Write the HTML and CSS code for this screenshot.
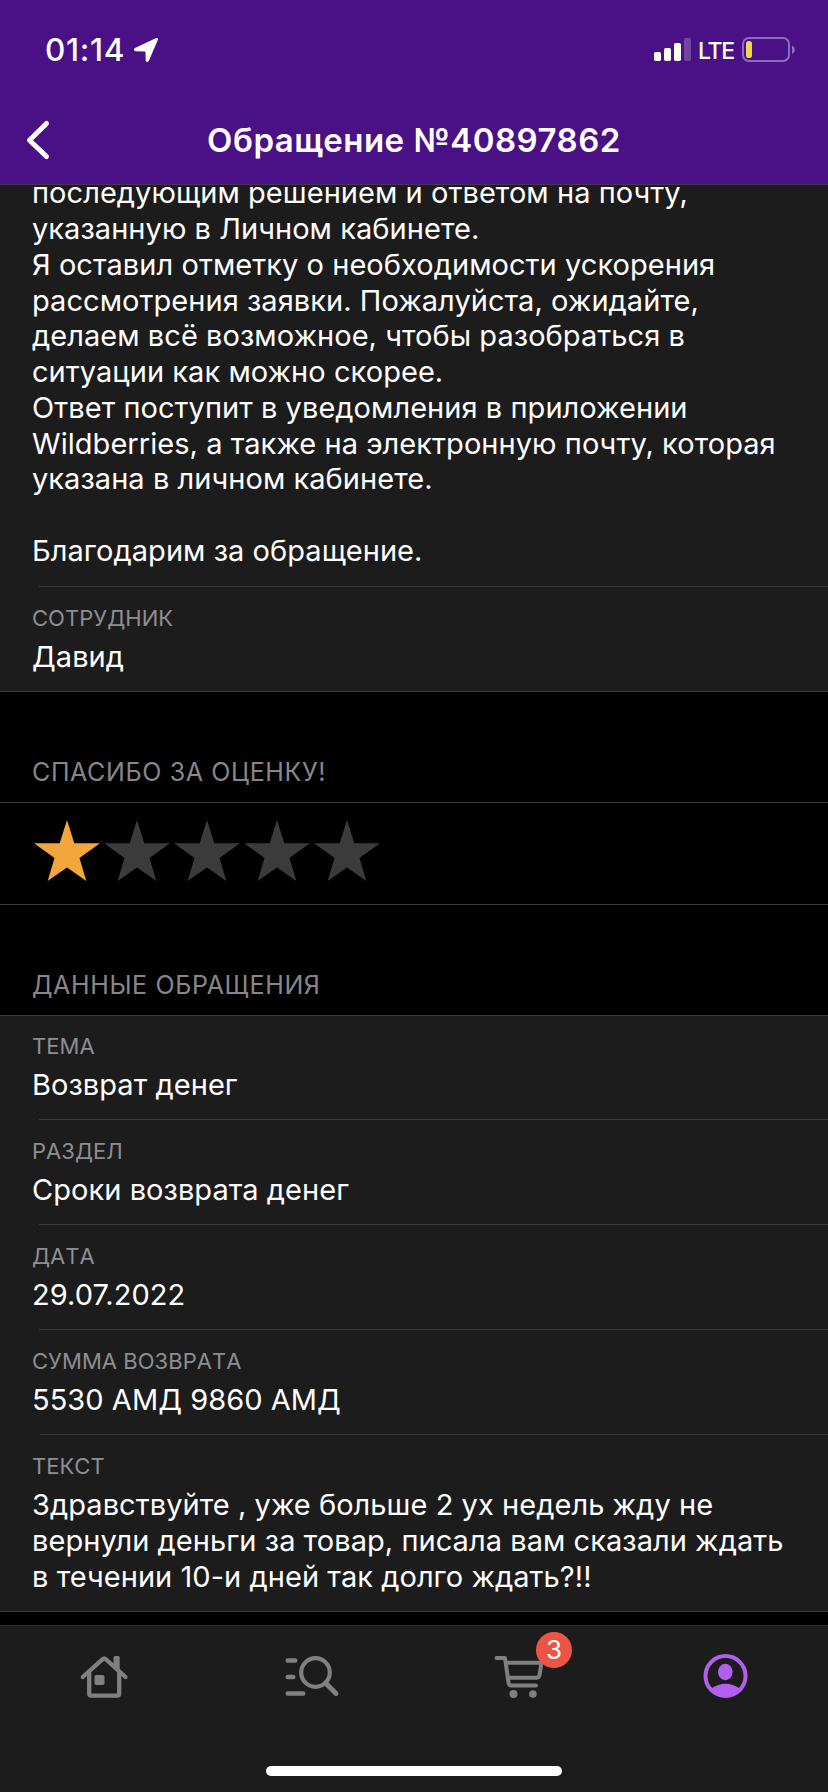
FILE: index.html
```
<!DOCTYPE html>
<html lang="ru">
<head>
<meta charset="utf-8">
<title>Обращение №40897862</title>
<link rel="stylesheet" href="styles.css">
</head>
<body>
<div class="screen">
  <header class="header">
    <div class="status">
      <div class="status-left">
        <span class="time">01:14</span>
        <svg class="location" width="26" height="26" viewBox="133 37 26 26"><path d="M156.200 38.100c1.200-.5 2.200.5 1.700 1.700L148.900 60.800c-.7 1.700-3.100 1.400-3.200-.5l-.2-8c0-.6-.3-.9-.9-.9l-9-.2c-1.900-.1-2.200-2.400-.6-3.200z" fill="#fff"/></svg>
      </div>
      <div class="status-right">
        <svg class="signal" width="38" height="24" viewBox="0 0 38 24"><g fill="#fff"><rect x="0" y="14" width="7" height="9" rx="1.700"/><rect x="10" y="10" width="7" height="13" rx="1.700"/><rect x="20" y="5" width="7" height="18" rx="1.700"/><rect x="30" y="0" width="7" height="23" rx="1.700" opacity=".22"/></g></svg>
        <span class="lte">LTE</span>
        <svg class="battery" width="54" height="26" viewBox="0 0 54 26"><rect x="1" y="1" width="46" height="23" rx="6" fill="none" stroke="#8f6bbd" stroke-width="2"/><path d="M50 8.500c3.700 1.200 3.700 7.300 0 8.500z" fill="#8f6bbd"/><rect x="4" y="4" width="6" height="17" rx="2.800" fill="#f2d64b"/></svg>
      </div>
    </div>
    <div class="nav">
      <svg class="back" width="26" height="42" viewBox="25 119 26 42"><path d="M46.500 123.500 29.500 140.200 46.500 156.500" fill="none" stroke="#fff" stroke-width="5" stroke-linecap="round" stroke-linejoin="round"/></svg>
      <h1 class="title">Обращение №40897862</h1>
    </div>
  </header>

  <main class="content">
    <section class="answer">
      <p class="body-text">последующим решением и ответом на почту,<br>указанную в Личном кабинете.<br>Я оставил отметку о необходимости ускорения<br>рассмотрения заявки. Пожалуйста, ожидайте,<br>делаем всё возможное, чтобы разобраться в<br>ситуации как можно скорее.<br>Ответ поступит в уведомления в приложении<br>Wildberries, а также на электронную почту, которая<br>указана в личном кабинете.<br><br>Благодарим за обращение.</p>
    </section>
    <div class="row"><div class="label">СОТРУДНИК</div><div class="body-text">Давид</div></div>

    <h2 class="heading">СПАСИБО ЗА ОЦЕНКУ!</h2>
    <div class="stars">
      <svg class="star star-on" viewBox="0 0 66 61"><path d="M33 0l7.300 23.200H66L45.500 38l6.800 23L33 47.500 13.700 61l6.800-23L0 23.200h25.700z"/></svg>
      <svg class="star" viewBox="0 0 66 61"><path d="M33 0l7.300 23.200H66L45.500 38l6.800 23L33 47.500 13.700 61l6.800-23L0 23.200h25.700z"/></svg>
      <svg class="star" viewBox="0 0 66 61"><path d="M33 0l7.300 23.200H66L45.500 38l6.800 23L33 47.500 13.700 61l6.800-23L0 23.200h25.700z"/></svg>
      <svg class="star" viewBox="0 0 66 61"><path d="M33 0l7.300 23.200H66L45.500 38l6.800 23L33 47.500 13.700 61l6.800-23L0 23.200h25.700z"/></svg>
      <svg class="star" viewBox="0 0 66 61"><path d="M33 0l7.300 23.200H66L45.500 38l6.800 23L33 47.500 13.700 61l6.800-23L0 23.200h25.700z"/></svg>
    </div>

    <h2 class="heading">ДАННЫЕ ОБРАЩЕНИЯ</h2>
    <div class="row row-first"><div class="label">ТЕМА</div><div class="body-text">Возврат денег</div></div>
    <div class="row"><div class="label">РАЗДЕЛ</div><div class="body-text">Сроки возврата денег</div></div>
    <div class="row"><div class="label">ДАТА</div><div class="body-text">29.07.2022</div></div>
    <div class="row"><div class="label">СУММА ВОЗВРАТА</div><div class="body-text">5530 АМД 9860 АМД</div></div>
    <div class="row row-last"><div class="label">ТЕКСТ</div><div class="body-text">Здравствуйте , уже больше 2 ух недель жду не<br>вернули деньги за товар, писала вам сказали ждать<br>в течении 10-и дней так долго ждать?!!</div></div>
  </main>

  <nav class="tabs">
    <div class="tab"><svg width="60" height="48" viewBox="73.500 1652 60 48"><g fill="none" stroke="#808080" stroke-width="4.300" stroke-linecap="round" stroke-linejoin="round"><path d="M82.300 1677 102.200 1659.200Q103.700 1657.700 105.200 1659.200L125 1677"/><path d="M88.700 1673v20.500q0 2.200 2.200 2.200h25.600q2.200 0 2.200-2.200V1673"/></g><path d="M113 1667v-9.500q0-1.500 1.500-1.500h3.200q1.500 0 1.500 1.500V1673z" fill="#808080"/><rect x="94" y="1675" width="10" height="10" rx="1.800" fill="#808080"/></svg></div>
    <div class="tab"><svg width="60" height="48" viewBox="280.500 1652 60 48"><g fill="none" stroke="#808080" stroke-linecap="round"><path d="M287.300 1660.500h7.400M287.300 1677h5.400M287.300 1693.500h15.400" stroke-width="4.600"/><circle cx="315" cy="1672.500" r="14.300" stroke-width="4.200"/><path d="M325 1683 335.500 1693.500" stroke-width="5"/></g></svg></div>
    <div class="tab"><svg width="60" height="48" viewBox="487.500 1652 60 48"><g fill="none" stroke="#808080" stroke-width="4" stroke-linecap="round" stroke-linejoin="round"><path d="M496 1658h8.500L508 1682.500q.4 3 3 3h24.500"/><path d="M506 1662.800h35l-2 12.500q-.4 2.400-2.800 2.400H508.500"/></g><g fill="#808080"><circle cx="513" cy="1694" r="4"/><circle cx="532.400" cy="1694" r="3.800"/></g></svg><span class="badge">3</span></div>
    <div class="tab"><svg width="60" height="48" viewBox="694.500 1652 60 48"><circle cx="725" cy="1676" r="20" fill="none" stroke="#b15fee" stroke-width="4"/><ellipse cx="724.800" cy="1672" rx="7.300" ry="8.300" fill="#b15fee"/><path d="M710.500 1688.700q14.500-10 29 0A20 20 0 0 1 710.500 1688.700z" fill="#b15fee"/></svg></div>
  </nav>
  <div class="home-area"><div class="home-indicator"></div></div>
</div>
</body>
</html>
```
FILE: styles.css
```
* { box-sizing: border-box; }
body { margin: 0; background: #000; }
.screen {
  width: 828px;
  height: 1792px;
  overflow: hidden;
  display: flex;
  flex-direction: column;
  background: #000;
  color: #fff;
  font-family: Inter, "Liberation Sans", sans-serif;
}
svg { display: block; flex: none; }
.header {
  flex: none;
  height: 185px;
  background: #4a1186;
  border-bottom: 1px solid #44384e;
}
.status {
  height: 96px;
  padding: 0 32px 0 45px;
  display: flex;
  justify-content: space-between;
}
.status-left, .status-right { display: flex; align-items: flex-start; }
.time {
  width: 88px;
  padding-top: 31px;
  font-size: 31.5px;
  line-height: 38px;
  font-weight: 500;
  letter-spacing: 0.7px;
}
.location { margin-top: 37px; }
.signal { margin-top: 38px; }
.lte {
  width: 50px;
  padding: 37px 0 0 6px;
  font-size: 23px;
  line-height: 28px;
  font-weight: 500;
  letter-spacing: -1.3px;
}
.battery { margin-top: 37px; }
.nav {
  height: 88px;
  padding: 23px 25px 0;
  display: grid;
  grid-template-columns: 26px 1fr 26px;
}
.title {
  margin: 0;
  font-size: 33px;
  line-height: 42px;
  font-weight: 600;
  letter-spacing: 0.5px;
  text-align: center;
  white-space: nowrap;
}
.content { flex: none; height: 1440px; overflow: hidden; }
.body-text {
  margin: 0;
  font-size: 29px;
  line-height: 35.8px;
  letter-spacing: 0.05px;
  white-space: nowrap;
}
.answer {
  height: 401px;
  overflow: hidden;
  padding-left: 32px;
  background: #1c1c1c;
}
.answer .body-text { margin-top: -9.9px; }
.row {
  height: 105px;
  padding: 18px 0 0 32px;
  background: #1c1c1c;
  border-top: 1px solid;
  border-image: linear-gradient(to right, #1c1c1c 40px, #3b3b3c 40px) 1;
}
.row-first {
  height: 104px;
  padding-top: 17px;
  border-image: none;
  border-color: #3b3b3c;
}
.row-last {
  height: 178px;
  padding-top: 19px;
  border-image: none;
  border: 0;
  border-bottom: 1px solid #3b3b3c;
  background: linear-gradient(to right, #1c1c1c 40px, #3b3b3c 40px) top / 100% 1px no-repeat, #1c1c1c;
}
.label {
  margin-bottom: 8px;
  color: #8e8e92;
  font-size: 22px;
  line-height: 26px;
  letter-spacing: 0.05px;
  font-kerning: none;
}
.heading {
  margin: 0;
  height: 111px;
  padding: 65px 0 0 32px;
  border-top: 1px solid #3b3b3c;
  color: #87878a;
  font-size: 25px;
  line-height: 30px;
  font-weight: 400;
  letter-spacing: 0.63px;
}
.stars {
  height: 102px;
  padding: 17px 0 0 34px;
  display: flex;
  gap: 4px;
  border-top: 1px solid #3b3b3c;
}
.star { width: 66px; height: 61px; fill: #3b3b3c; }
.star-on { fill: #f2a63b; }
.tabs {
  flex: none;
  height: 115px;
  padding-top: 26px;
  display: grid;
  grid-template-columns: repeat(4, 207px);
  background: #1c1c1c;
  border-top: 1px solid #303030;
}
.tab { position: relative; display: flex; justify-content: center; align-items: flex-start; }
.badge {
  position: absolute;
  left: 122px;
  top: -20px;
  width: 36px;
  height: 36px;
  border-radius: 50%;
  background: #ec5545;
  font-size: 26px;
  line-height: 36px;
  text-align: center;
}
.home-area { flex: 1; padding-top: 26px; background: #1c1c1c; }
.home-indicator { width: 296px; height: 10px; margin: 0 auto; border-radius: 5px; background: #fff; }
```
